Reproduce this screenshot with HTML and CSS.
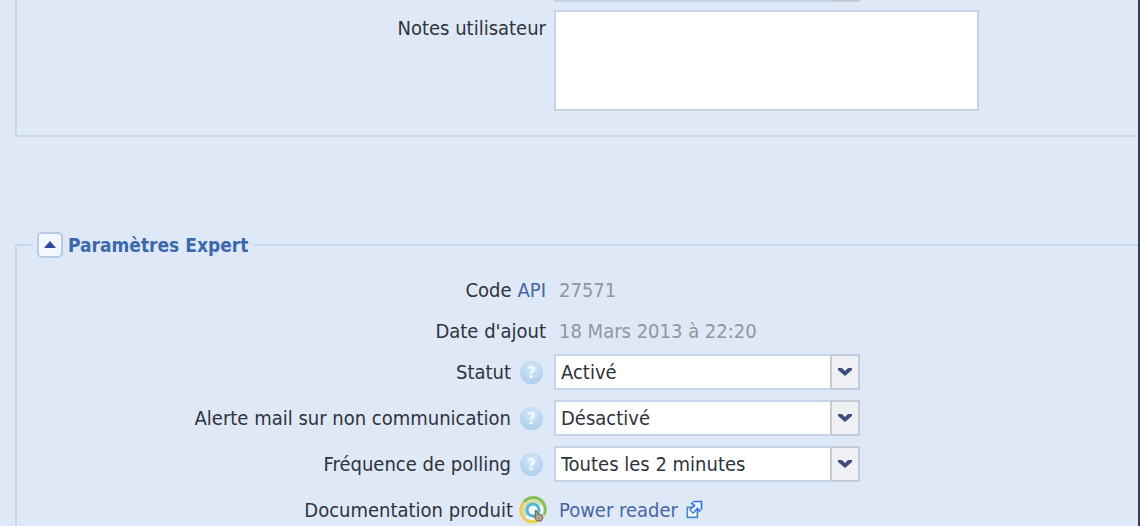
FILE: index.html
```html
<!DOCTYPE html>
<html lang="fr">
<head>
    <meta charset="UTF-8">
    <meta name="viewport" content="width=device-width, initial-scale=1.0">
    <title>Paramètres</title>
    <link rel="stylesheet" href="styles.css">
</head>
<body>
    <form class="panel">
        <fieldset class="group group-top">
            <div class="row row-clipped">
                <span class="label"></span>
                <div class="combo">
                    <select aria-label="Type"><option></option></select>
                    <span class="trigger"></span>
                </div>
            </div>
            <div class="row row-notes">
                <label class="label" for="notes">Notes utilisateur</label>
                <textarea class="notes" id="notes"></textarea>
            </div>
        </fieldset>

        <fieldset class="group group-expert">
            <legend>
                <button type="button" class="toggle" aria-label="Replier">
                    <svg width="12" height="8" viewBox="0 0 12 8"><path d="M0 7L6 0l6 7z" fill="#33479a"/></svg>
                </button>
                Paramètres Expert
            </legend>

            <div class="row row-text">
                <span class="label">Code <a href="#">API</a></span>
                <span class="value">27571</span>
            </div>
            <div class="row row-text">
                <span class="label">Date d'ajout</span>
                <span class="value">18 Mars 2013 à 22:20</span>
            </div>
            <div class="row">
                <span class="label">
                    <label for="statut">Statut</label>
                    <span class="help">?</span>
                </span>
                <div class="combo">
                    <select id="statut">
                        <option>Activé</option>
                        <option>Désactivé</option>
                    </select>
                    <span class="trigger"><svg width="14" height="10" viewBox="0 0 14 10"><path d="M0 1h4l3 3 3-3h4v2L7 9 0 3z" fill="#3d4d7c"/></svg></span>
                </div>
            </div>
            <div class="row">
                <span class="label">
                    <label for="alerte">Alerte mail sur non communication</label>
                    <span class="help">?</span>
                </span>
                <div class="combo">
                    <select id="alerte">
                        <option>Désactivé</option>
                        <option>Activé</option>
                    </select>
                    <span class="trigger"><svg width="14" height="10" viewBox="0 0 14 10"><path d="M0 1h4l3 3 3-3h4v2L7 9 0 3z" fill="#3d4d7c"/></svg></span>
                </div>
            </div>
            <div class="row">
                <span class="label">
                    <label for="polling">Fréquence de polling</label>
                    <span class="help">?</span>
                </span>
                <div class="combo">
                    <select id="polling">
                        <option>Toutes les 2 minutes</option>
                    </select>
                    <span class="trigger"><svg width="14" height="10" viewBox="0 0 14 10"><path d="M0 1h4l3 3 3-3h4v2L7 9 0 3z" fill="#3d4d7c"/></svg></span>
                </div>
            </div>
            <div class="row row-last">
                <span class="label">
                    Documentation produit
                    <svg class="product" width="28" height="28" viewBox="0 0 28 28" fill="none">
                        <circle cx="14" cy="14" r="10" fill="#f4faf8"/>
                        <path d="M5 6a12 12 0 0 0 4 19" stroke="#ecc765" stroke-width="3"/>
                        <path d="M5 6a12 12 0 0 1 20 13" stroke="#86bf52" stroke-width="3"/>
                        <path d="M9 25a12 12 0 0 0 9 0" stroke="#e6d648" stroke-width="3"/>
                        <path d="M7 20a9 9 0 0 1 15-11" stroke="#c9dd86" stroke-width="2"/>
                        <circle cx="14" cy="14" r="6" stroke="#54b3d8" stroke-width="3"/>
                        <path d="M17 14l2 4 4 1 1 3-2 3h-4l-3-4 2-1-1-5z" fill="#b9a288" stroke="#66604f"/>
                    </svg>
                </span>
                <a class="value" href="#">Power reader
                    <svg class="external" width="20" height="20" viewBox="0 0 12 12">
                        <path d="M2 5h6v6H2z" fill="#fff" stroke="#4388c9"/>
                        <path d="M6 1h5v5L9.500 8 8 6.500 5.500 9 3 6.500 5.500 4 4 2.500z" fill="#3572dc"/>
                        <path d="M10 2v5L8 5 5.500 8 4 6.500 7 4 5 2z" fill="#e8f3ff"/>
                    </svg>
                </a>
            </div>
        </fieldset>
    </form>
</body>
</html>
```
FILE: styles.css
```css
* {
    box-sizing: border-box;
}

body {
    margin: 0;
    height: 100vh;
    overflow: hidden;
    background-color: #dee8f6;
    border-right: 2px solid #3b3e45;
    color: #30333b;
    font-family: "DejaVu Sans Condensed", "DejaVu Sans", sans-serif;
    font-size: 20px;
    line-height: 24px;
}

a {
    color: #4866a4;
    text-decoration: none;
}

.panel {
    display: flex;
    flex-direction: column;
    padding-left: 15px;
}

.group {
    margin: 0;
    padding: 0;
    min-width: 0;
    border: 2px solid #c9d7ea;
    border-right: none;
}

.group-top {
    border-top: none;
    padding-bottom: 24px;
}

.group-expert {
    margin-top: 95px;
    border-bottom: none;
}

legend {
    display: flex;
    align-items: center;
    gap: 5px;
    margin-left: 16px;
    padding: 0 6px 0 4px;
    color: #3c68ac;
    font-size: 19px;
    font-weight: bold;
}

.toggle {
    display: flex;
    align-items: center;
    justify-content: center;
    width: 26px;
    height: 26px;
    padding: 0;
    background-color: #f3f8fe;
    border: 2px solid #b5cbe8;
    border-radius: 5px;
}

.row {
    display: grid;
    grid-template-columns: 529px 1fr;
    column-gap: 8px;
    align-items: center;
    min-height: 36px;
    margin-bottom: 10px;
}

.row-clipped {
    margin-top: -34px;
    margin-bottom: 8px;
}

.row-notes {
    align-items: start;
    margin-bottom: 0;
}

.row-notes .label {
    padding-top: 6px;
}

.row-text {
    min-height: 24px;
    margin: 20px 0 17px;
}

.row-text + .row-text {
    margin: 0 0 11px;
}

.row-last {
    margin: 0;
}

.label {
    display: flex;
    align-items: center;
    justify-content: flex-end;
    gap: 6px;
}

.value {
    padding-left: 5px;
}

span.value {
    color: #92969d;
}

.notes {
    display: block;
    width: 425px;
    height: 101px;
    padding: 6px;
    background-color: #fff;
    border: 2px solid #c5d5e9;
    font: inherit;
    resize: none;
}

.combo {
    display: grid;
    width: 306px;
    height: 36px;
}

.combo select {
    grid-area: 1 / 1;
    padding: 0 36px 0 5px;
    appearance: none;
    background-color: #fff;
    border: 2px solid #c5d3e8;
    border-radius: 0;
    color: #30333b;
    font: inherit;
}

.trigger {
    grid-area: 1 / 1;
    justify-self: end;
    display: flex;
    align-items: center;
    justify-content: center;
    width: 30px;
    background-color: #eff0f4;
    border: 2px solid #c5cbdb;
    pointer-events: none;
}

.help {
    width: 23px;
    height: 23px;
    margin: 0 3px;
    background: radial-gradient(circle at 50% 30%, #d4e8f8, #a3c8e8);
    border-radius: 50%;
    color: #f4faff;
    font-size: 16px;
    font-weight: bold;
    line-height: 23px;
    text-align: center;
}

.product {
    margin-right: -1px;
}

.external {
    vertical-align: -2px;
}
```
